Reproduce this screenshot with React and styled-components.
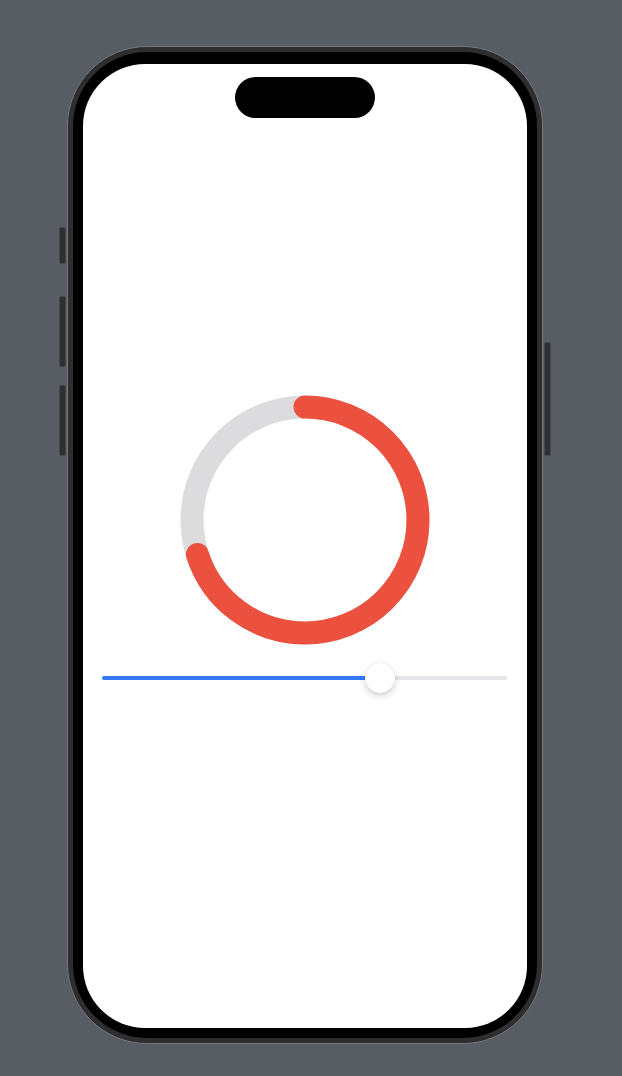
import React, { useState } from "react";
import styled, { createGlobalStyle } from "styled-components";

const GlobalStyle = createGlobalStyle`
  html, body {
    margin: 0;
    padding: 0;
    background: #585c63;
    font-family: "Inter", "Liberation Sans", sans-serif;
  }
`;

const Page = styled.div`
  display: flex;
  justify-content: flex-start;
  padding: 46px 0 0 67px;
  min-height: 1076px;
  box-sizing: border-box;
`;

const Frame = styled.div`
  position: relative;
  width: 476px;
  height: 998px;
  box-sizing: border-box;
  padding: 5px;
  border: 1px solid #74777c;
  border-radius: 80px;
  background: #2e2e2f;
`;

const Bezel = styled.div`
  height: 100%;
  box-sizing: border-box;
  padding: 12px 10px 10px 10px;
  border-radius: 74px;
  background: #000;
`;

const Screen = styled.div`
  position: relative;
  height: 100%;
  border-radius: 62px;
  background: #fff;
  overflow: hidden;
  display: flex;
  flex-direction: column;
  align-items: center;
  padding-top: 331px;
  box-sizing: border-box;
`;

const Island = styled.div`
  position: absolute;
  top: 13px;
  left: 50%;
  transform: translateX(-50%);
  width: 140px;
  height: 41px;
  border-radius: 21px;
  background: #000;
`;

// hardware keys sit on the outside of the frame
const SideKey = styled.span`
  position: absolute;
  top: ${(p) => p.top}px;
  height: ${(p) => p.h}px;
  ${(p) => (p.right ? "right: -9px;" : "left: -9px;")}
  width: 7px;
  box-sizing: border-box;
  border: 1px solid #45474b;
  border-radius: 2px;
  background: #2f3032;
`;

const Ring = styled.svg`
  display: block;
  width: 250px;
  height: 250px;
  transform: rotate(-90deg);
`;

const SliderRow = styled.div`
  align-self: stretch;
  margin-top: 18px;
  padding: 0 20px 0 19px;
`;

const Track = styled.div`
  position: relative;
  height: 30px;
  display: flex;
  align-items: center;
`;

const Rail = styled.div`
  flex: 1;
  height: 4px;
  border-radius: 2px;
  background: #e5e5ea;
  overflow: hidden;
`;

const Fill = styled.div`
  height: 100%;
  background: #3478f6;
`;

const Thumb = styled.div`
  position: absolute;
  top: 0;
  width: 30px;
  height: 30px;
  margin-left: -15px;
  border-radius: 50%;
  background: #fff;
  box-shadow: 0 0 1px rgba(0, 0, 0, 0.12), 0 3px 8px rgba(0, 0, 0, 0.15),
    0 3px 1px rgba(0, 0, 0, 0.04);
`;

const ProgressRing = ({ value }) => {
  const r = 113;
  const c = 2 * Math.PI * r;
  return (
    <Ring viewBox="0 0 250 250">
      <circle cx="125" cy="125" r={r} fill="none" stroke="#dcdcdf" strokeWidth="23" />
      <circle
        cx="125"
        cy="125"
        r={r}
        fill="none"
        stroke="#ec503f"
        strokeWidth="23"
        strokeLinecap="round"
        strokeDasharray={`${c * value} ${c}`}
      />
    </Ring>
  );
};

const Slider = ({ value }) => {
  // thumb travels inside the rail, inset by its radius
  const left = `calc(15px + (100% - 30px) * ${value})`;
  return (
    <SliderRow>
      <Track>
        <Rail>
          <Fill style={{ width: left }} />
        </Rail>
        <Thumb style={{ left }} />
      </Track>
    </SliderRow>
  );
};

const App = () => {
  const [progress] = useState(0.7);
  return (
    <>
      <GlobalStyle />
      <Page>
        <Frame>
          <SideKey top={180} h={37} />
          <SideKey top={249} h={71} />
          <SideKey top={338} h={71} />
          <SideKey right top={295} h={114} />
          <Bezel>
            <Screen>
              <Island />
              <ProgressRing value={progress} />
              <Slider value={progress} />
            </Screen>
          </Bezel>
        </Frame>
      </Page>
    </>
  );
};

export default App;
